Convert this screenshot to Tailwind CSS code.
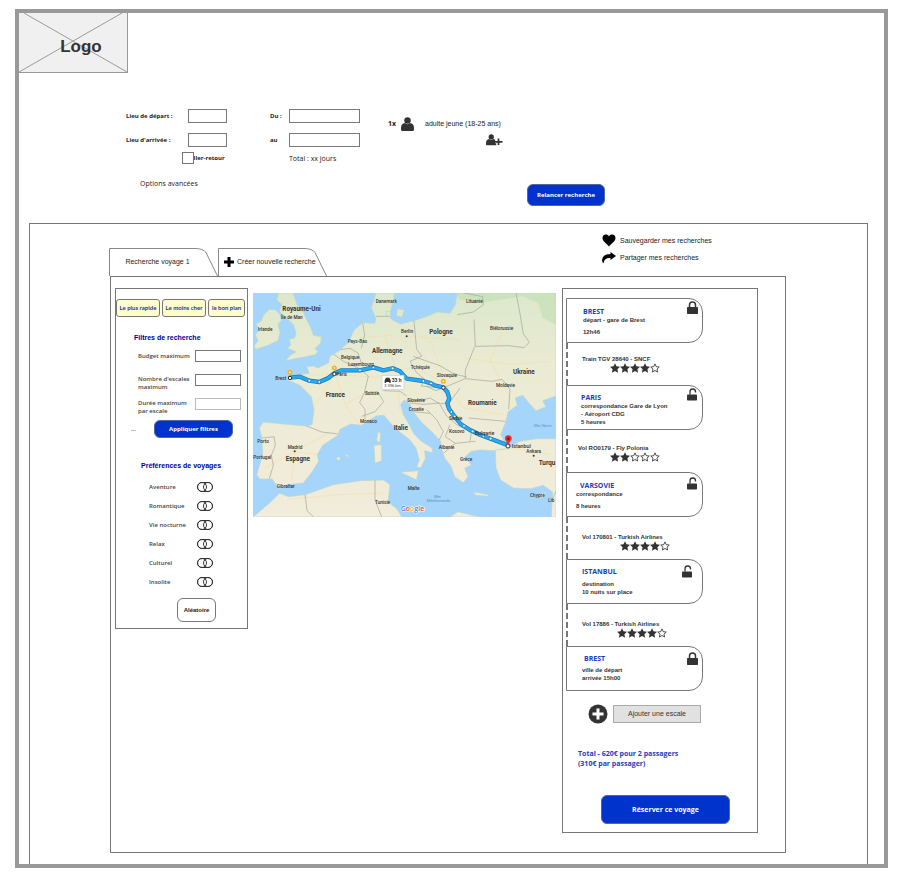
<!DOCTYPE html>
<html lang="fr">
<head>
<meta charset="utf-8">
<title>Recherche de voyage</title>
<script src="https://cdn.jsdelivr.net/npm/@tailwindcss/browser@4"></script>
</head>
<body class="bg-white font-['Liberation_Sans',sans-serif] text-[7px] leading-[8px] text-[#222]">
<svg class="hidden" aria-hidden="true">
  <symbol id="star" viewBox="0 0 20 20"><path d="M10 .3l3 6.400 7 .8-5.200 4.800 1.400 7-6.200-3.500-6.200 3.500 1.400-7L0 7.500l7-.8z" fill="#333"/></symbol>
  <symbol id="star-o" viewBox="0 0 20 20"><path d="M10 1.800l2.500 5.600 6 .6-4.500 4.100 1.200 6-5.200-3.100-5.200 3.100 1.200-6L1.500 8l6-.6z" fill="#fff" stroke="#333" stroke-width="1.700"/></symbol>
  <symbol id="lock" viewBox="0 0 22 26"><path d="M5 12V8a6 6 0 0 1 12 0v4" fill="none" stroke="#333" stroke-width="3"/><rect x="0" y="12" width="22" height="14" rx="1.500" fill="#333"/></symbol>
  <symbol id="unlock" viewBox="0 0 22 26"><path d="M6 13V7.500a5.500 5.500 0 0 1 11 0V9" fill="none" stroke="#333" stroke-width="2.600"/><rect x="0" y="13" width="20" height="12" rx="1.500" fill="#333"/></symbol>
  <symbol id="person" viewBox="0 0 26 28"><circle cx="13" cy="7" r="6.500" fill="#333"/><path d="M8 12q5 4.500 10 0q8 1 8 10v3q0 3-3 3H3q-3 0-3-3v-3q0-9 8-10z" fill="#333"/></symbol>
  <symbol id="tab" viewBox="0 0 109 28"><path d="M.5 28V.5H86q8 0 11 4L108.500 28" fill="#fff" stroke="#888" stroke-width="1"/></symbol>
</svg>

<div class="mt-[9px] mr-4 mb-[17px] ml-[15px] border-4 border-[#999]">
  <header>
    <div class="relative flex h-[60px] w-[109px] items-center justify-center border-r border-b border-[#999] bg-[#f0f0f0] pt-2 pl-4">
      <svg class="absolute inset-0 size-full" viewBox="0 0 109 60" preserveAspectRatio="none" aria-hidden="true"><path d="M5 0L109 60M104 0L0 60" stroke="#999" fill="none"/></svg>
      <span class="relative text-[17px] leading-5 font-bold text-[#333]">Logo</span>
    </div>

    <form class="flex items-start pt-9 pl-[107px] font-['Open_Sans',sans-serif]">
      <div class="w-36">
        <div class="flex h-[14px] items-center text-[6px] font-bold">
          <label for="from" class="w-[62px]">Lieu de départ :</label>
          <input id="from" type="text" class="h-[14px] w-[39px] border border-[#777] bg-white">
        </div>
        <div class="mt-[10px] flex h-[14px] items-center text-[6px] font-bold">
          <label for="to" class="w-[62px]">Lieu d'arrivée :</label>
          <input id="to" type="text" class="h-[14px] w-[39px] border border-[#777] bg-white">
        </div>
        <div class="mt-[5px] ml-14 flex h-3 items-center text-[6px] font-bold">
          <input id="return" type="checkbox" class="z-10 size-3 shrink-0 appearance-none border border-[#777] bg-white checked:bg-[#03c]">
          <label for="return" class="-ml-1 whitespace-nowrap">aller-retour</label>
        </div>
        <button type="button" class="mt-4 ml-[14px] block leading-[8px] font-medium">Options avancées</button>
      </div>
      <div class="w-[90px]">
        <div class="flex h-[14px] items-center text-[6px] font-bold">
          <label for="start" class="w-[19px]">Du :</label>
          <input id="start" type="text" class="h-[14px] w-[71px] border border-[#777] bg-white">
        </div>
        <div class="mt-[10px] flex h-[14px] items-center text-[6px] font-bold">
          <label for="end" class="w-[19px]">au</label>
          <input id="end" type="text" class="h-[14px] w-[71px] border border-[#777] bg-white">
        </div>
        <p class="mt-2 ml-[19px] font-medium">Total : xx jours</p>
      </div>
      <div class="mt-2 ml-7 w-[115px]">
        <div class="flex items-center">
          <span class="w-[13px] font-bold">1x</span>
          <svg class="h-[14px] w-[13px]" aria-hidden="true"><use href="#person"/></svg>
          <span class="ml-[11px] font-['Liberation_Sans',sans-serif] whitespace-nowrap">adulte jeune (18-25 ans)</span>
        </div>
        <button type="button" aria-label="Ajouter un passager" class="mt-[3px] ml-auto block">
          <svg class="h-3 w-[17px]" viewBox="0 0 34 24" aria-hidden="true"><use href="#person" width="21" height="23"/><path d="M25 9v13M18 15.500h15" stroke="#fff" stroke-width="6"/><path d="M25 9v13M18 15.500h15" stroke="#333" stroke-width="3.500"/></svg>
        </button>
      </div>
      <button type="submit" class="mt-[75px] ml-6 h-[22px] w-[78px] rounded-md border border-[#56689a] bg-[#03c] text-[6px] font-bold text-white">Relancer recherche</button>
    </form>
  </header>

  <main class="mt-[17px] mr-4 ml-[10px] border border-b-0 border-[#777] pb-[11px]">
    <div class="flex h-[52px] items-end pl-[79px]">
      <button class="relative h-7 w-[109px]"><svg class="absolute inset-0 size-full" aria-hidden="true"><use href="#tab"/></svg><span class="relative block pr-3">Recherche voyage 1</span></button>
      <button class="relative h-7 w-[109px]"><svg class="absolute inset-0 size-full" aria-hidden="true"><use href="#tab"/></svg>
        <span class="relative flex items-center gap-[3px] pl-[6px] whitespace-nowrap"><svg class="size-[10px]" viewBox="0 0 10 10" aria-hidden="true"><path d="M5 0v10M0 5h10" stroke="#000" stroke-width="3"/></svg>Créer nouvelle recherche</span></button>
      <div class="mr-36 ml-auto flex w-[121px] flex-col gap-1 self-start pt-[10px]">
        <button class="flex items-center gap-1 whitespace-nowrap"><svg class="h-[13px] w-[14px]" viewBox="0 0 28 26" aria-hidden="true"><path d="M14 25C10 19 1 15 1 8 1 0 11-1 14 5c3-6 13-5 13 3 0 7-9 11-13 17z"/></svg>Sauvegarder mes recherches</button>
        <button class="flex items-center gap-1 whitespace-nowrap"><svg class="h-[13px] w-[14px]" viewBox="0 0 28 26" aria-hidden="true"><path d="M17 2l11 8-11 8v-4Q4 13 3 25 0 23 0 18 1 6 17 6z"/></svg>Partager mes recherches</button>
      </div>
    </div>

    <div class="mr-[81px] ml-20 flex items-start border border-[#777] pt-[11px] pr-[27px] pb-[19px] pl-1">
      <aside class="h-[341px] w-[133px] shrink-0 border border-[#777] pt-[10px] font-['Open_Sans',sans-serif] text-[6px] font-semibold text-[#444]">
        <div class="flex gap-[2px] font-['Lato',sans-serif] font-bold text-[#1b2fa8]">
          <button class="h-[18px] w-11 rounded-[3px] border border-[#777] bg-[#ffc] whitespace-nowrap">Le plus rapide</button>
          <button class="h-[18px] w-11 rounded-[3px] border border-[#777] bg-[#ffc] whitespace-nowrap">Le moins cher</button>
          <button class="h-[18px] w-[37px] rounded-[3px] border border-[#777] bg-[#ffc] whitespace-nowrap">le bon plan</button>
        </div>
        <h2 class="mt-[17px] ml-[18px] font-['Liberation_Sans',sans-serif] text-[7px] font-bold text-[#009]">Filtres de recherche</h2>
        <form>
          <div class="mt-2 ml-[22px] grid grid-cols-[57px_46px] gap-y-3">
            <label for="budget" class="pt-[2px]">Budget maximum</label>
            <input id="budget" type="text" class="h-3 w-[46px] border border-[#777]">
            <label for="stops" class="h-3 pt-[1px]">Nombre d'escales maximum</label>
            <input id="stops" type="text" class="h-3 w-[46px] border border-[#777]">
            <label for="duration" class="h-3 pt-[1px]">Durée maximum par escale</label>
            <input id="duration" type="text" class="h-3 w-[46px] border border-[#bbb]">
          </div>
          <div class="mt-[10px] ml-[15px] flex items-center">
            <span class="w-[23px]">...</span>
            <button type="submit" class="h-[18px] w-[79px] rounded-md border border-[#56689a] bg-[#03c] font-bold text-white">Appliquer filtres</button>
          </div>
        </form>
        <h2 class="mt-6 ml-[25px] font-['Liberation_Sans',sans-serif] text-[7px] font-bold text-[#009]">Préférences de voyages</h2>
        <div class="mt-3 mr-[34px] ml-[33px] flex flex-col gap-[9px]">
          <label class="flex h-[10px] items-center justify-between">Aventure<input type="checkbox" class="relative h-[10px] w-4 appearance-none rounded-full border border-[#333] before:absolute before:-top-px before:-left-px before:size-[10px] before:rounded-full before:border before:border-[#333] after:absolute after:-top-px after:-right-px after:size-[10px] after:rounded-full after:border after:border-[#333] checked:bg-[#03c]"></label>
          <label class="flex h-[10px] items-center justify-between">Romantique<input type="checkbox" class="relative h-[10px] w-4 appearance-none rounded-full border border-[#333] before:absolute before:-top-px before:-left-px before:size-[10px] before:rounded-full before:border before:border-[#333] after:absolute after:-top-px after:-right-px after:size-[10px] after:rounded-full after:border after:border-[#333] checked:bg-[#03c]"></label>
          <label class="flex h-[10px] items-center justify-between">Vie nocturne<input type="checkbox" class="relative h-[10px] w-4 appearance-none rounded-full border border-[#333] before:absolute before:-top-px before:-left-px before:size-[10px] before:rounded-full before:border before:border-[#333] after:absolute after:-top-px after:-right-px after:size-[10px] after:rounded-full after:border after:border-[#333] checked:bg-[#03c]"></label>
          <label class="flex h-[10px] items-center justify-between">Relax<input type="checkbox" class="relative h-[10px] w-4 appearance-none rounded-full border border-[#333] before:absolute before:-top-px before:-left-px before:size-[10px] before:rounded-full before:border before:border-[#333] after:absolute after:-top-px after:-right-px after:size-[10px] after:rounded-full after:border after:border-[#333] checked:bg-[#03c]"></label>
          <label class="flex h-[10px] items-center justify-between">Culturel<input type="checkbox" class="relative h-[10px] w-4 appearance-none rounded-full border border-[#333] before:absolute before:-top-px before:-left-px before:size-[10px] before:rounded-full before:border before:border-[#333] after:absolute after:-top-px after:-right-px after:size-[10px] after:rounded-full after:border after:border-[#333] checked:bg-[#03c]"></label>
          <label class="flex h-[10px] items-center justify-between">Insolite<input type="checkbox" class="relative h-[10px] w-4 appearance-none rounded-full border border-[#333] before:absolute before:-top-px before:-left-px before:size-[10px] before:rounded-full before:border before:border-[#333] after:absolute after:-top-px after:-right-px after:size-[10px] after:rounded-full after:border after:border-[#333] checked:bg-[#03c]"></label>
        </div>
        <button class="mt-[11px] ml-[61px] block h-6 w-[39px] rounded-md border border-[#777] font-['Liberation_Sans',sans-serif] font-bold text-[#222]">Aléatoire</button>
      </aside>

      <div class="mt-[5px] ml-[5px] min-w-0 flex-1">
        <svg class="block h-auto w-full" viewBox="9 15 909 672" role="img" aria-label="Itinéraire de Brest à Istanbul">
          <defs>
            <linearGradient id="veg" gradientUnits="userSpaceOnUse" x1="0" y1="15" x2="0" y2="687"><stop offset="0" stop-color="#dce8cb"/><stop offset=".35" stop-color="#ebebd3"/><stop offset="1" stop-color="#f2ecdb"/></linearGradient>
            <path id="europe" d="M378 15L364 60 378 92 374 106 338 104 312 126 296 162 268 188 240 205 236 224 204 240 190 234 170 236 178 256 150 260 116 262 112 276 150 292 184 326 192 366 186 410 166 414 100 408 40 402 28 420 36 450 38 500 20 560 30 573 66 573 88 602 112 590 160 585 186 552 206 520 202 500 218 472 264 442 270 424 302 408 334 412 356 398 378 384 402 382 424 408 452 434 480 456 498 480 508 516 500 536 512 540 526 512 524 488 548 494 546 480 514 460 492 438 478 410 460 380 452 350 462 336 478 346 490 372 514 402 548 434 572 460 576 486 584 510 604 536 614 566 640 584 654 566 644 540 664 532 646 506 664 490 690 486 730 488 776 482 764 462 752 440 768 400 774 372 802 352 796 330 818 322 836 344 858 368 888 356 878 338 918 324V15H622L616 50 600 76 562 72 534 84 492 98 452 108 428 96 414 84 424 62 434 15z"/>
            <path id="turkey" d="M736 486L776 482 808 460 860 452 918 452V687H904L908 612 880 592 842 602 790 600 752 576 738 540z"/>
            <path id="africa" d="M9 687L60 644 88 616 116 626 166 620 250 590 332 578 400 576 420 590 414 642 440 662 456 687z"/>
            <clipPath id="land"><use href="#europe"/><use href="#turkey"/><use href="#africa"/></clipPath>
          </defs>
          <rect x="9" y="15" width="909" height="672" fill="#a5d5fb"/>
          <g fill="url(#veg)" stroke="#bcd8c8" stroke-width="2">
            <use href="#europe"/><use href="#turkey"/><use href="#africa"/>
            <path d="M86 15L80 36 96 50 88 68 104 86 118 98 132 112 138 136 134 150 118 154 122 172 112 180 138 192 120 202 108 218 134 212 166 206 196 200 204 190 194 182 212 166 214 146 190 142 182 118 170 96 160 72 146 60 138 40 128 15z"/>
            <path d="M58 64L78 66 90 80 94 98 84 108 90 134 84 158 54 172 18 184 12 174 24 158 16 140 28 124 18 108 34 98 40 82z"/>
            <path d="M600 687l24-16 40 10 30 6zM455 552l50-4-5 28-42-20zM385 428l7 10-3 28-9-10zM372 472l22-2 1 48-20 8zM258 510l10-4 4 8-8 3zM286 500l10 2-4 6zM672 612l42 8 2 5-40-4zM865 622l22-8-5 14zM443 62l20 4-8 22-16-6zM408 70l14 2-2 14-12-4z"/>
          </g>
          <g clip-path="url(#land)">
            <path d="M618 15h300v30l-40 6-60-26-120 18-70-8zM860 30l58-10v90l-40-20z" fill="#bfe0b2" opacity=".6"/>
            <g fill="none" stroke="#f6dda0" stroke-width="2" opacity=".8"><path d="M120 270l140-15 60-60M255 258l-70 110-30 40M255 258l30 90 40 60M285 348l60-30M135 490l110-60M135 490l-90 50M135 490l-10 90M135 490l65 10M255 258l120 10 110-30M330 150l110-10 30 30 60 60M400 130l40 120 10 120M470 145l160 10M500 240l90 50 50 70 120 20M540 160l40 100M760 120l-40 100 60 110M640 210l140 20 120-10M600 350l40 70 80 40M780 480l120 20M110 635l150-15 150-5"/></g>
            <g fill="none" stroke="#a3a39c" stroke-width="2"><path d="M165 412l50 20 50 6M38 450l34-4 4 26-12 30 6 30-12 40M250 198l30 22 45 20 30 24-12 50-14 30 16 20 0 30M270 185l30-4 24 14 10 30M338 105l6 36-10 40M343 315l40-4 18 30-26 30-40 14M400 308l50 2 20 14M378 85l40 0M492 98l4 46 4 40 16 20-36 16 20 34 24 20-10 20 40 4M490 205l40 14 40 14 40 24 40 10M622 80l48-8 30-22-2-24-80-16M672 95l4 80 100-2 46 6 16-16-18-26-10-60-12-62M674 176l-28 70 0 26-48 20-40 16-30-14M646 272l80 8 30-6 24 30-4 60M630 300l-30 42-30 6-30-18-40 10-30-2M656 390l110 10M570 350l20 34 30 26 44 22-4 28M530 365l30 30 20 36-18 36M600 410l-14 36 30 20 60-6M616 466l-36 30M165 618l6 50 20 19M375 575l0 60 20 52M918 610l-18 40M480 345l40 4 50-4M540 376l-60-6"/></g>
          </g>
          <g fill="none" stroke-linecap="round" stroke-linejoin="round">
            <path d="M120 269L150 266 178 278 208 282 235 270 253 256 275 247 330 247 370 238 400 247 428 241 450 250 470 272 520 279 543 286 556 293 580 298 592 312 598 331 592 346 597 362 614 386 632 408 660 426 690 440 722 452 774 472" stroke="#1678bd" stroke-width="13"/>
            <path d="M120 269L150 266 178 278 208 282 235 270 253 256 275 247 330 247 370 238 400 247 428 241 450 250 470 272 520 279 543 286 556 293 580 298 592 312 598 331 592 346 597 362 614 386 632 408 660 426 690 440 722 452 774 472" stroke="#29a7ef" stroke-width="9"/>
          </g>
          <g fill="#fff" stroke="#167ab8" stroke-width="2"><circle cx="178" cy="278" r="4"/><circle cx="208" cy="282" r="4"/><circle cx="330" cy="247" r="4"/><circle cx="370" cy="238" r="4"/><circle cx="428" cy="241" r="4"/><circle cx="520" cy="279" r="4"/><circle cx="543" cy="286" r="4"/><circle cx="604" cy="372" r="4"/><circle cx="614" cy="386" r="4"/><circle cx="642" cy="414" r="4"/><circle cx="668" cy="430" r="4"/><circle cx="700" cy="444" r="4"/><circle cx="722" cy="452" r="4"/></g>
          <g fill="#fff" stroke="#333" stroke-width="3"><circle cx="120" cy="270" r="5"/><circle cx="253" cy="258" r="5"/><circle cx="580" cy="299" r="5"/><circle cx="774" cy="474" r="6"/></g>
          <g fill="#fff" stroke="#f5b323" stroke-width="5"><circle cx="120" cy="253" r="5"/><circle cx="253" cy="240" r="5"/><circle cx="580" cy="280" r="5"/></g>
          <path d="M775 474c-2-14-10-15-10-22a10 10 0 0 1 20 0c0 7-8 8-10 22z" fill="#ea2f25"/><circle cx="775" cy="452" r="4" fill="#811"/>
          <rect x="396" y="262" width="66" height="42" fill="#fff" stroke="#ccc" stroke-width="2"/>
          <path d="M404 277l4-8h10l4 8v8h-4v-3h-10v3h-4z" fill="#333"/>
          <g font-family="Roboto, sans-serif" fill="#333" stroke="none">
            <text x="425" y="281" font-size="15" font-weight="700">33 h</text><text x="403" y="296" font-size="12">3 396 km</text>
            <g font-size="19" font-weight="700"><text x="97" y="68">Royaume-Uni</text><text x="366" y="195">Allemagne</text><text x="227" y="328">France</text><text x="431" y="427">Italie</text><text x="107" y="519">Espagne</text><text x="538" y="137">Pologne</text><text x="789" y="258">Ukraine</text><text x="654" y="351">Roumanie</text><text x="866" y="531">Turqu</text></g>
            <g font-size="14" font-weight="500"><text x="93" y="93">Île de Man</text><text x="24" y="128">Irlande</text><text x="377" y="45">Danemark</text><text x="293" y="165">Pays-Bas</text><text x="273" y="213">Belgique</text><text x="294" y="234">Luxembourg</text><text x="345" y="321">Suisse</text><text x="330" y="405">Monaco</text><text x="10" y="513">Portugal</text><text x="22" y="464">Porto</text><text x="113" y="483">Madrid</text><text x="80" y="601">Gibraltar</text><text x="375" y="649">Tunisie</text><text x="76" y="275">Brest</text><text x="259" y="263">Paris</text><text x="453" y="136">Berlin</text><text x="648" y="46">Lituanie</text><text x="720" y="126">Biélorussie</text><text x="482" y="243">Tchéquie</text><text x="560" y="266">Slovaquie</text><text x="738" y="298">Moldavie</text><text x="472" y="341">Slovénie</text><text x="476" y="368">Croatie</text><text x="597" y="396">Serbie</text><text x="597" y="436">Kosovo</text><text x="566" y="484">Albanie</text><text x="630" y="519">Grèce</text><text x="473" y="606">Malte</text><text x="840" y="627">Chypre</text><text x="894" y="643">Lib</text><text x="829" y="496">Ankara</text></g>
            <g font-size="16" font-weight="500"><text x="674" y="441">Bulgarie</text><text x="785" y="480">Istanbul</text></g>
            <g font-size="12" fill="#5b93c5"><text x="852" y="416">Mer Noire</text><text x="552" y="630">Mer</text><text x="530" y="643">Méditerranée</text></g>
            <g><circle cx="134" cy="490" r="3"/><circle cx="470" cy="145" r="3"/><circle cx="851" cy="503" r="3"/></g>
          </g>
          <text x="452" y="669" font-family="Open Sans, sans-serif" font-size="21" font-weight="600" stroke="#fff" stroke-width="3" paint-order="stroke"><tspan fill="#4285f4">G</tspan><tspan fill="#ea4335">o</tspan><tspan fill="#f4b400">o</tspan><tspan fill="#4285f4">g</tspan><tspan fill="#34a853">l</tspan><tspan fill="#ea4335">e</tspan></text>
        </svg>
      </div>

      <section class="ml-[6px] w-[196px] shrink-0 border border-[#777] pt-[9px] pb-[8px] pl-[3px] text-[6px] font-bold text-[#333]">
        <article class="flex h-[45px] w-[137px] justify-between rounded-r-[14px] border border-[#777] pt-[2px] pr-[4px] pl-4">
          <div class="pt-[7px]"><h3 class="font-['Open_Sans',sans-serif] text-[7px] text-[#1a3dbd]">BREST</h3><p>départ - gare de Brest</p><p class="mt-1">12h46</p></div>
          <svg class="h-[13px] w-[11px]" aria-hidden="true"><use href="#lock"/></svg>
        </article>
        <div class="flex h-[42px] flex-col border-l-2 border-dashed border-[#777] pt-3 pl-[14px]"><p>Train TGV 28640 - SNCF</p>
          <div class="ml-[28px] flex" role="img" aria-label="4 étoiles sur 5"><svg class="size-[10px]"><use href="#star"/></svg><svg class="size-[10px]"><use href="#star"/></svg><svg class="size-[10px]"><use href="#star"/></svg><svg class="size-[10px]"><use href="#star"/></svg><svg class="size-[10px]"><use href="#star-o"/></svg></div></div>
        <article class="flex h-[45px] w-[137px] justify-between rounded-r-[14px] border border-[#777] pt-[2px] pr-[4px] pl-[14px]">
          <div class="pt-[6px]"><h3 class="font-['Open_Sans',sans-serif] text-[7px] text-[#1a3dbd]">PARIS</h3><p>correspondance Gare de Lyon</p><p>- Aéroport CDG</p><p>5 heures</p></div>
          <svg class="h-[13px] w-[11px]" aria-hidden="true"><use href="#unlock"/></svg>
        </article>
        <div class="flex h-[42px] flex-col border-l-2 border-dashed border-[#777] pt-[14px] pl-[10px]"><p>Vol RO0179 - Fly Polonia</p>
          <div class="ml-8 flex" role="img" aria-label="2 étoiles sur 5"><svg class="size-[10px]"><use href="#star"/></svg><svg class="size-[10px]"><use href="#star"/></svg><svg class="size-[10px]"><use href="#star-o"/></svg><svg class="size-[10px]"><use href="#star-o"/></svg><svg class="size-[10px]"><use href="#star-o"/></svg></div></div>
        <article class="flex h-[45px] w-[137px] justify-between rounded-r-[14px] border border-[#777] pt-[4px] pr-[4px] pl-[9px]">
          <div class="pt-[5px]"><h3 class="pl-1 font-['Open_Sans',sans-serif] text-[7px] text-[#1a3dbd]">VARSOVIE</h3><p>correspondance</p><p class="mt-1">8 heures</p></div>
          <svg class="h-[13px] w-[11px]" aria-hidden="true"><use href="#unlock"/></svg>
        </article>
        <div class="flex h-[42px] flex-col border-l-2 border-dashed border-[#777] pt-4 pl-[14px]"><p>Vol 170801 - Turkish Airlines</p>
          <div class="ml-[38px] flex" role="img" aria-label="4 étoiles sur 5"><svg class="size-[10px]"><use href="#star"/></svg><svg class="size-[10px]"><use href="#star"/></svg><svg class="size-[10px]"><use href="#star"/></svg><svg class="size-[10px]"><use href="#star"/></svg><svg class="size-[10px]"><use href="#star-o"/></svg></div></div>
        <article class="flex h-[45px] w-[137px] justify-between rounded-r-[14px] border border-[#777] pt-[5px] pr-[9px] pl-[15px]">
          <div class="pt-[3px]"><h3 class="font-['Open_Sans',sans-serif] text-[7px] text-[#1a3dbd]">ISTANBUL</h3><p class="mt-1">destination</p><p>10 nuits sur place</p></div>
          <svg class="h-[13px] w-[11px]" aria-hidden="true"><use href="#unlock"/></svg>
        </article>
        <div class="flex h-[42px] flex-col border-l-2 border-dashed border-[#777] pt-4 pl-[14px]"><p>Vol 17886 - Turkish Airlines</p>
          <div class="ml-[35px] flex" role="img" aria-label="4 étoiles sur 5"><svg class="size-[10px]"><use href="#star"/></svg><svg class="size-[10px]"><use href="#star"/></svg><svg class="size-[10px]"><use href="#star"/></svg><svg class="size-[10px]"><use href="#star"/></svg><svg class="size-[10px]"><use href="#star-o"/></svg></div></div>
        <article class="flex h-[45px] w-[137px] justify-between rounded-r-[14px] border border-[#777] pt-[5px] pr-[4px] pl-[15px]">
          <div class="pt-[3px]"><h3 class="pl-[2px] font-['Open_Sans',sans-serif] text-[7px] text-[#1a3dbd]">BREST</h3><p class="mt-[3px]">ville de départ</p><p>arrivée 15h00</p></div>
          <svg class="h-[13px] w-[11px]" aria-hidden="true"><use href="#lock"/></svg>
        </article>
        <div class="mt-[13px] ml-[22px] flex items-center gap-[5px]">
          <svg class="size-5" viewBox="0 0 20 20" aria-hidden="true"><circle cx="10" cy="10" r="9.500" fill="#333"/><path d="M10 4.500v11M4.500 10h11" stroke="#fff" stroke-width="3"/></svg>
          <button class="h-[18px] w-[88px] border border-[#aaa] bg-[#e1e1e1] text-[7px] font-normal">Ajouter une escale</button>
        </div>
        <p class="mt-[25px] ml-3 font-['Open_Sans',sans-serif] text-[7px] leading-[10px] text-[#1a3dbd]">Total - 620€ pour 2 passagers<br>(310€ par passager)</p>
        <button class="mt-[26px] ml-[35px] block h-[29px] w-[129px] rounded-md border border-[#56689a] bg-[#03c] font-['Open_Sans',sans-serif] text-[7px] font-bold text-white">Réserver ce voyage</button>
      </section>
    </div>
  </main>
</div>
</body>
</html>
